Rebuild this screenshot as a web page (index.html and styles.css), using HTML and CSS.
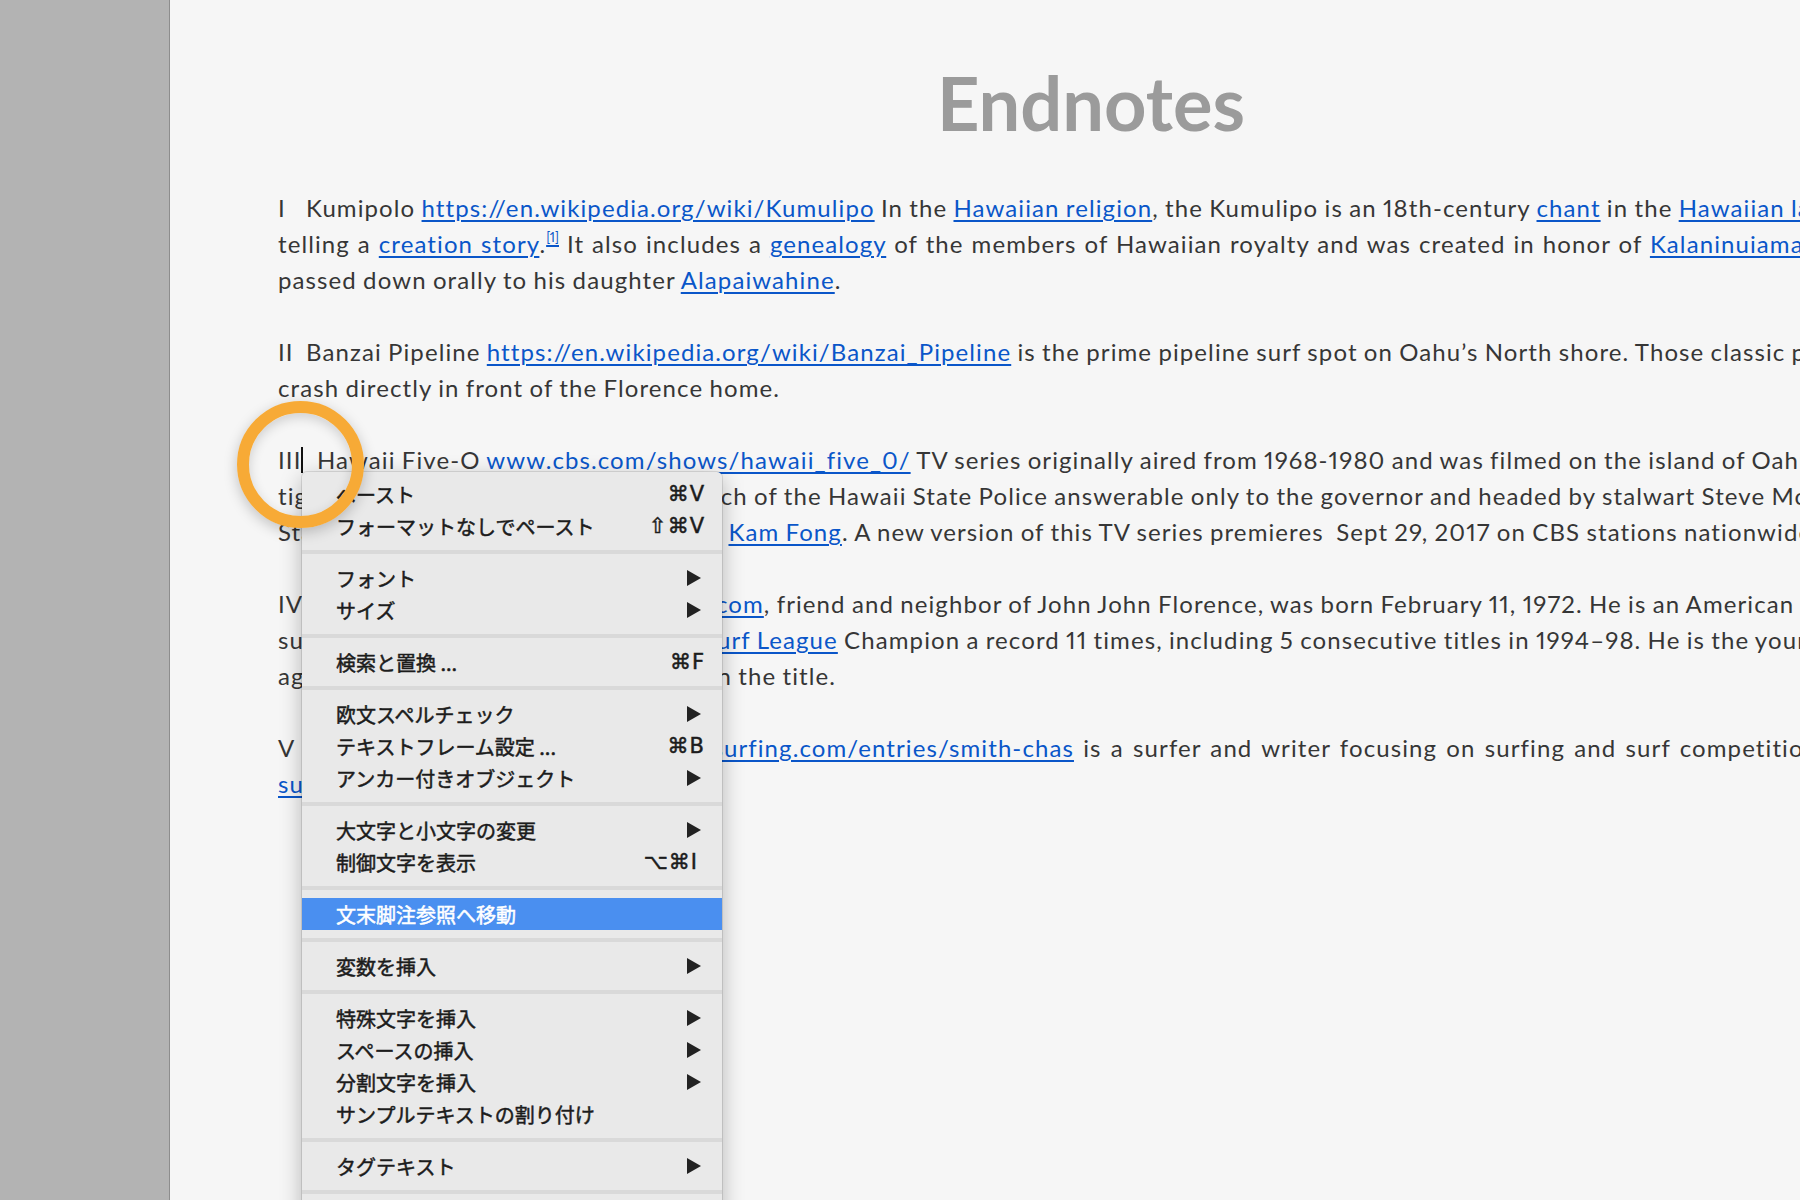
FILE: index.html
```html
<!DOCTYPE html>
<html lang="en">
<head>
    <meta charset="UTF-8">
    <title>Endnotes</title>
    <link rel="stylesheet" href="styles.css">
</head>
<body>
    <div class="layout">
        <div class="pasteboard"></div>
        <div class="page">
            <h1>Endnotes</h1>

            <p class="note"><span class="num">I</span>Kumipolo <a href="#">https://en.wikipedia.org/wiki/Kumulipo</a> In the <a href="#">Hawaiian religion</a>, the Kumulipo is an 18th-century <a href="#">chant</a> in the <a href="#">Hawaiian language</a><br><span class="loose">telling a <a href="#">creation story</a>.<sup><a href="#">[1]</a></sup> It also includes a <a href="#">genealogy</a> of the members of Hawaiian royalty and was created in honor of <a href="#">Kalaninuiamamao</a> and</span><br>passed down orally to his daughter <a href="#">Alapaiwahine</a>.</p>

            <p class="note"><span class="num">II</span>Banzai Pipeline <a href="#">https://en.wikipedia.org/wiki/Banzai_Pipeline</a> is the prime pipeline surf spot on Oahu’s North shore. Those classic pipeline waves<br>crash directly in front of the Florence home.</p>

            <p class="note"><span class="num wide">III<span class="caret"></span></span>Hawaii Five-O <a href="#">www.cbs.com/shows/hawaii_five_0/</a> TV series originally aired from 1968-1980 and was filmed on the island of Oahu. The series<br>tightly knit fictional select special branch of the Hawaii State Police answerable only to the governor and headed by stalwart Steve McGarrett<br>Starring Jack Lord James McArthur and <a href="#">Kam Fong</a>. A new version of this TV series premieres&nbsp; Sept 29, 2017 on CBS stations nationwide.</p>

            <p class="note"><span class="num">IV</span>Kelly Slater <a href="#">https://www.kellyslater.com</a>, friend and neighbor of John John Florence, was born February 11, 1972. He is an American professional<br>surfer, who has been crowned <a href="#">World Surf League</a> Champion a record 11 times, including 5 consecutive titles in 1994–98. He is the youngest at<br>age 20, and the oldest, at age 39, to win the title.</p>

            <p class="note"><span class="spread"><span class="num last">V</span>Chas Smith <a href="#">https://encyclopediaofsurfing.com/entries/smith-chas</a> is a surfer and writer focusing on surfing and surf competition</span><br><a href="#">surf culture</a> for magazines and books.</p>
        </div>
    </div>

    <div class="menu">
        <div class="menu-group">
            <div class="menu-item"><span>ペースト</span><span class="key">⌘V</span></div>
            <div class="menu-item"><span>フォーマットなしでペースト</span><span class="key">⇧⌘V</span></div>
        </div>
        <div class="menu-sep"></div>
        <div class="menu-group">
            <div class="menu-item"><span>フォント</span><svg class="arrow" viewBox="0 0 14 16"><polygon points="0,0 14,8 0,16"/></svg></div>
            <div class="menu-item"><span>サイズ</span><svg class="arrow" viewBox="0 0 14 16"><polygon points="0,0 14,8 0,16"/></svg></div>
        </div>
        <div class="menu-sep"></div>
        <div class="menu-group">
            <div class="menu-item"><span>検索と置換 ...</span><span class="key">⌘F</span></div>
        </div>
        <div class="menu-sep"></div>
        <div class="menu-group">
            <div class="menu-item"><span>欧文スペルチェック</span><svg class="arrow" viewBox="0 0 14 16"><polygon points="0,0 14,8 0,16"/></svg></div>
            <div class="menu-item"><span>テキストフレーム設定 ...</span><span class="key">⌘B</span></div>
            <div class="menu-item"><span>アンカー付きオブジェクト</span><svg class="arrow" viewBox="0 0 14 16"><polygon points="0,0 14,8 0,16"/></svg></div>
        </div>
        <div class="menu-sep"></div>
        <div class="menu-group">
            <div class="menu-item"><span>大文字と小文字の変更</span><svg class="arrow" viewBox="0 0 14 16"><polygon points="0,0 14,8 0,16"/></svg></div>
            <div class="menu-item"><span>制御文字を表示</span><span class="key short">⌥⌘I</span></div>
        </div>
        <div class="menu-sep"></div>
        <div class="menu-group">
            <div class="menu-item active"><span>文末脚注参照へ移動</span></div>
        </div>
        <div class="menu-sep"></div>
        <div class="menu-group">
            <div class="menu-item"><span>変数を挿入</span><svg class="arrow" viewBox="0 0 14 16"><polygon points="0,0 14,8 0,16"/></svg></div>
        </div>
        <div class="menu-sep"></div>
        <div class="menu-group">
            <div class="menu-item"><span>特殊文字を挿入</span><svg class="arrow" viewBox="0 0 14 16"><polygon points="0,0 14,8 0,16"/></svg></div>
            <div class="menu-item"><span>スペースの挿入</span><svg class="arrow" viewBox="0 0 14 16"><polygon points="0,0 14,8 0,16"/></svg></div>
            <div class="menu-item"><span>分割文字を挿入</span><svg class="arrow" viewBox="0 0 14 16"><polygon points="0,0 14,8 0,16"/></svg></div>
            <div class="menu-item"><span>サンプルテキストの割り付け</span></div>
        </div>
        <div class="menu-sep"></div>
        <div class="menu-group">
            <div class="menu-item"><span>タグテキスト</span><svg class="arrow" viewBox="0 0 14 16"><polygon points="0,0 14,8 0,16"/></svg></div>
        </div>
        <div class="menu-sep"></div>
        <div class="menu-group">
            <div class="menu-item"><span>ハイパーリンクと相互参照</span><svg class="arrow" viewBox="0 0 14 16"><polygon points="0,0 14,8 0,16"/></svg></div>
        </div>
    </div>

    <div class="ring"></div>
</body>
</html>
```

FILE: styles.css
```css
body {
    margin: 0;
    height: 1200px;
    overflow: hidden;
    background-color: #f6f6f6;
    font-family: Lato, "Noto Sans", sans-serif;
    color: #363636;
}
.layout {
    display: flex;
    height: 1200px;
}
.pasteboard {
    flex: none;
    width: 169px;
    background-color: #b3b3b3;
    border-right: 1px solid #8d8d8d;
}
.page {
    flex: none;
    width: 1626px;
    padding: 58px 0 0 108px;
}
h1 {
    margin: 0 0 42px;
    font-size: 74px;
    line-height: 90px;
    font-weight: 700;
    color: #9b9b9b;
    text-align: center;
}
.note {
    margin: 0 0 36px;
    font-size: 24px;
    line-height: 36px;
    letter-spacing: 1.1px;
    word-spacing: -1px;
    font-variant-numeric: proportional-nums;
    white-space: nowrap;
}
.note a {
    color: #0a56c9;
    text-decoration: underline;
    text-decoration-thickness: 2px;
    text-underline-offset: 3px;
}
.note sup {
    font-size: 13px;
    line-height: 0;
    letter-spacing: 0;
    vertical-align: 11px;
}
.num {
    display: inline-block;
    width: 28px;
}
.num.wide {
    width: 39px;
}
.num.last {
    width: 35px;
}
.loose {
    word-spacing: 0.7px;
}
.spread {
    word-spacing: 2px;
}
.caret {
    display: inline-block;
    width: 2px;
    height: 26px;
    vertical-align: -4px;
    background-color: #111;
}

.menu {
    position: absolute;
    left: 302px;
    top: 472px;
    width: 420px;
    background-color: #e9e9e9;
    border-radius: 5px 5px 0 0;
    box-shadow: 0 6px 22px rgba(0, 0, 0, 0.28), 0 0 0 1px rgba(0, 0, 0, 0.1);
    font-family: "Noto Sans CJK JP", sans-serif;
    font-size: 20px;
    color: #1c1c1c;
}
.menu-group {
    padding: 8px 0;
}
.menu-group:first-child {
    padding-top: 6px;
}
.menu-sep {
    height: 4px;
    background-color: #d9d9d9;
}
.menu-item {
    display: flex;
    align-items: center;
    justify-content: space-between;
    height: 32px;
    padding: 0 17px 0 34px;
    -webkit-text-stroke: 0.5px currentColor;
}
.menu-item.active {
    background-color: #4a8ff0;
    color: #fff;
}
.key {
    font-family: "DejaVu Sans", sans-serif;
    font-size: 21px;
    letter-spacing: 1px;
}
.key.short {
    margin-right: 7px;
}
.arrow {
    width: 14px;
    height: 16px;
    margin-right: 4px;
    fill: #222;
}

.ring {
    position: absolute;
    left: 237px;
    top: 401px;
    width: 127px;
    height: 127px;
    box-sizing: border-box;
    border: 12px solid #f7aa36;
    border-radius: 50%;
    box-shadow: 0 4px 14px rgba(0, 0, 0, 0.22), inset 0 4px 12px rgba(0, 0, 0, 0.16);
}
```
